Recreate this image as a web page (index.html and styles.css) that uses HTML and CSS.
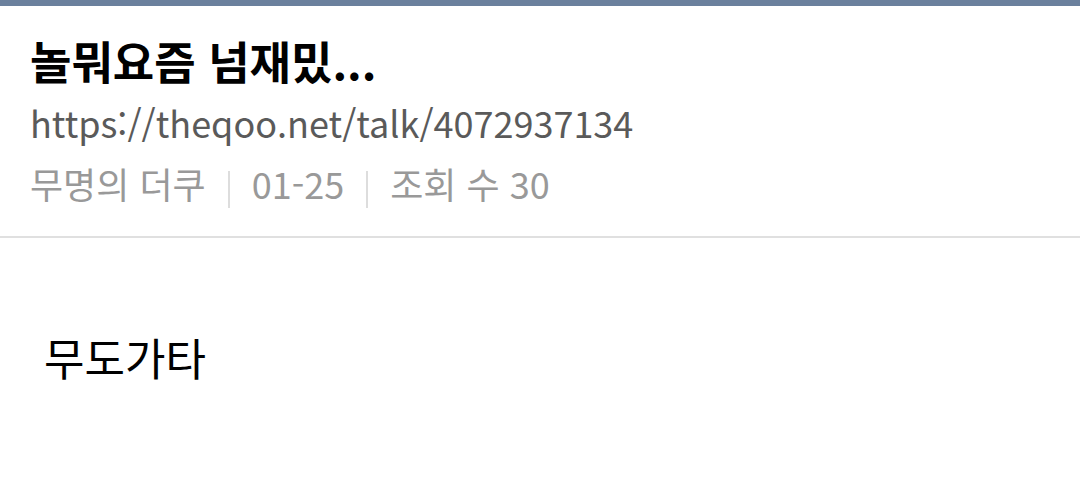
FILE: index.html
```html
<!DOCTYPE html>
<html lang="ko">
<head>
<meta charset="utf-8">
<link rel="stylesheet" href="styles.css">
</head>
<body>
<div class="topbar"></div>
<header class="head">
  <h1 class="title">놀뭐요즘 넘재밌...</h1>
  <div class="url">https://theqoo.net/talk/4072937134</div>
  <div class="meta">
    <span>무명의 더쿠</span>
    <span class="sep"></span>
    <span>01-25</span>
    <span class="sep"></span>
    <span>조회 수 30</span>
  </div>
</header>
<main class="content">
  <p class="body-text">무도가타</p>
</main>
</body>
</html>
```
FILE: styles.css
```css
html, body {
  margin: 0;
  padding: 0;
  background: #fff;
  font-family: "Noto Sans CJK KR", "Noto Sans", sans-serif;
}
.topbar {
  height: 6px;
  background: #6b809d;
}
.head {
  padding: 25px 30px 0 30px;
  border-bottom: 2px solid #e0e0e0;
  height: 232px;
  box-sizing: border-box;
}
.title {
  margin: 0;
  font-size: 45px;
  font-weight: 700;
  line-height: 60px;
  color: #000;
}
.url {
  font-size: 36px;
  line-height: 62px;
  color: #5a5a5a;
}
.meta {
  display: flex;
  align-items: center;
  gap: 22px;
  font-size: 36px;
  line-height: 60px;
  color: #999;
}
.sep {
  width: 2px;
  height: 37px;
  margin-top: 12px;
  background: #ddd;
}
.content {
  padding: 89px 44px 0 44px;
}
.body-text {
  margin: 0;
  font-size: 44px;
  line-height: 60px;
  color: #000;
}
```
